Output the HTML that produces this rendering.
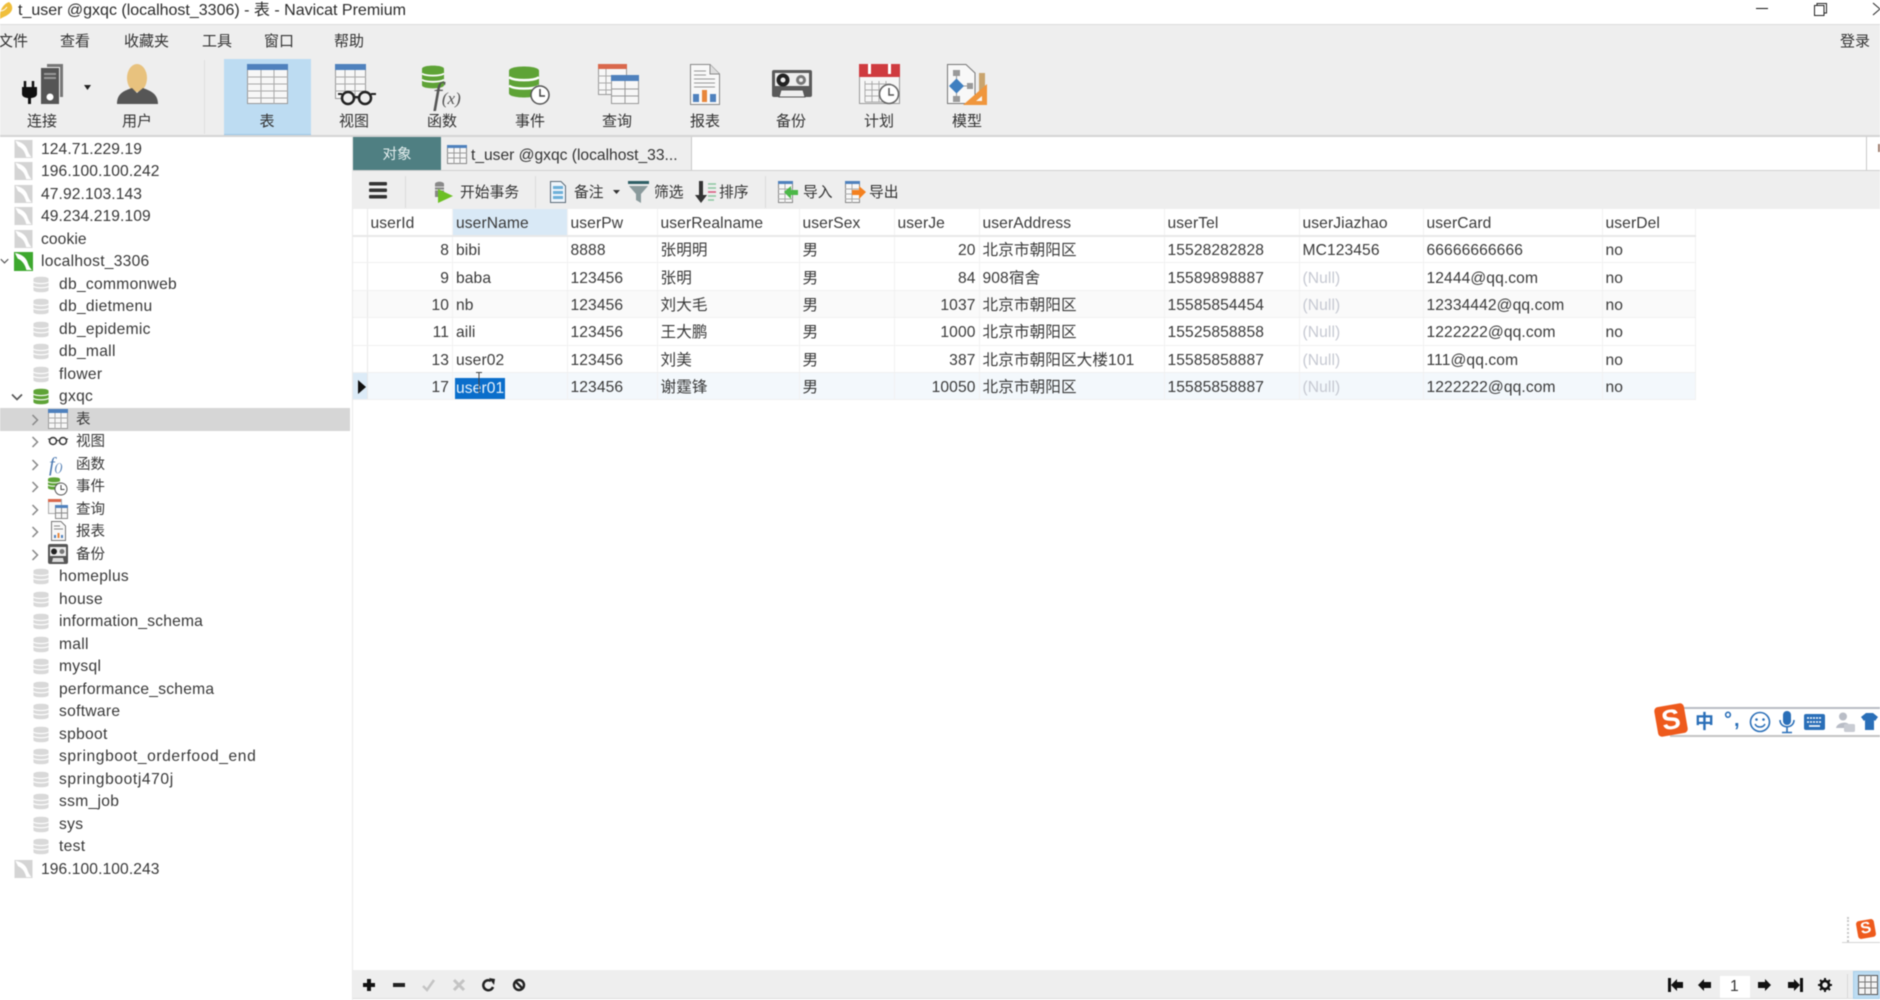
<!DOCTYPE html>
<html lang="zh">
<head>
<meta charset="utf-8">
<title>t_user @gxqc (localhost_3306) - 表 - Navicat Premium</title>
<style>
*{box-sizing:border-box}
html,body{margin:0;padding:0;width:1880px;height:1000px;overflow:hidden;background:#fff}
body{font-family:"Liberation Sans","Noto Sans CJK SC",sans-serif;color:#333;font-size:15.5px}
#root{position:absolute;left:0;top:0;width:1880px;height:1000px;overflow:hidden;filter:blur(.5px);background:#fff}
.a{position:absolute}
.t{position:absolute;white-space:nowrap;line-height:20px}
.lb{position:absolute;top:111.5px;width:60px;text-align:center;font-size:15px;line-height:20px;color:#333}
svg{position:absolute;overflow:visible}
.m{position:absolute;top:32px;font-size:15px;line-height:20px;color:#333}
#tree{position:absolute;left:0;top:137px;width:350px}
.r{position:relative;height:22.5px;line-height:22.5px;white-space:nowrap;font-size:15.6px;color:#383838}
.r span{position:absolute;top:1.5px}
.r svg{top:0;margin-top:.5px}
.l1 span{left:41px;letter-spacing:.1px}.l2 span{left:59px;letter-spacing:.3px}.l3 span{left:76px;font-size:14.5px;letter-spacing:0}
table{position:absolute;left:353px;top:209px;border-collapse:collapse;table-layout:fixed;width:1342px;font-size:15.6px;color:#3a3a3a;letter-spacing:.1px}
td{height:27.4px;padding:4px 3px 0;border-right:1px solid #f2f2f2;border-bottom:1px solid #f0f0f0;white-space:nowrap;overflow:hidden;line-height:20px}
tr.h td{height:26.5px;border-bottom:2px solid #e8e8e8;background:#fff}
td.g{padding:0;border-right:1px solid #e8e8e8}
td.n{text-align:right}
td.z{color:#c6c9d2}
</style>
</head>
<body>
<div id="root">
<svg width="0" height="0" style="position:absolute">
<defs>
<symbol id="srv" viewBox="0 0 20 20"><rect width="20" height="20" fill="#d4d4d4"/><path d="M1 1C7 2 12 5 14 10 15 13 16 16 19 19L13 19C12 14 9 9 4 7 3 5 2 3 1 1Z" fill="#fff"/></symbol>
<symbol id="srvg" viewBox="0 0 20 20"><rect width="20" height="20" fill="#3da82e"/><path d="M1 1C7 2 12 5 14 10 15 13 16 16 19 19L13 19C12 14 9 9 4 7 3 5 2 3 1 1Z" fill="#fff"/></symbol>
<symbol id="db" viewBox="0 0 16 18"><path d="M0 3C0 0 16 0 16 3V15C16 18 0 18 0 15Z" fill="#d9d9d9"/><path d="M0 6.500C3 8.500 13 8.500 16 6.500M0 11C3 13 13 13 16 11" stroke="#fff" stroke-width="1.300" fill="none"/></symbol>
<symbol id="dbg" viewBox="0 0 16 18"><path d="M0 3C0 0 16 0 16 3V15C16 18 0 18 0 15Z" fill="#5ea336"/><path d="M0 6.500C3 8.500 13 8.500 16 6.500M0 11C3 13 13 13 16 11" stroke="#fff" stroke-width="1.300" fill="none"/></symbol>
<symbol id="chv" viewBox="0 0 8 12"><path d="M1.500 1L6.500 6 1.500 11" fill="none" stroke="#888" stroke-width="1.500"/></symbol>
<symbol id="chd" viewBox="0 0 12 8"><path d="M1 1.500L6 6.500 11 1.500" fill="none" stroke="#555" stroke-width="1.600"/></symbol>
</defs>
</svg>

<!-- Title bar -->
<svg style="left:0;top:2px" width="14" height="18" viewBox="0 0 14 18"><path d="M0 17C-1 9 3 2 9 0 12 2 14 7 10 11 7 14 3 15 0 17Z" fill="#f0bf3c"/><path d="M0 9C3 9 5 8 7 5" stroke="#fff" fill="none"/></svg>
<div class="t" style="left:18px;top:1px;height:24px;line-height:20px;font-size:16px;color:#2b2b2b">t_user @gxqc (localhost_3306) - 表 - Navicat Premium</div>
<div class="a" style="left:1756px;top:8px;width:12px;height:1px;background:#111"></div>
<svg style="left:1814px;top:3px" width="13" height="13" viewBox="0 0 13 13"><rect x=".5" y="2.500" width="9.500" height="10" fill="#fff" stroke="#222"/><path d="M3 2.500V.5H12.500V10H10" fill="none" stroke="#222"/></svg>
<svg style="left:1873px;top:3px" width="7" height="12" viewBox="0 0 7 12"><path d="M0 0L7 6 0 12" fill="none" stroke="#222"/></svg>

<!-- Toolbar bg -->
<div class="a" style="left:0;top:24px;width:1880px;height:113px;background:#eeeeee;border-top:1px solid #dcdcdc;border-bottom:2px solid #d4d4d4"></div>
<div class="m" style="left:-2px">文件</div>
<div class="m" style="left:60px">查看</div>
<div class="m" style="left:124px">收藏夹</div>
<div class="m" style="left:202px">工具</div>
<div class="m" style="left:264px">窗口</div>
<div class="m" style="left:334px">帮助</div>
<div class="m" style="left:1840px">登录</div>

<div class="a" style="left:204px;top:60px;width:1px;height:74px;background:#dedede"></div>
<div class="a" style="left:224px;top:59px;width:87px;height:76px;background:#bddcf2;border-bottom:1px solid #9fc9e8"></div>

<!-- connect -->
<svg style="left:22px;top:64px" width="42" height="40" viewBox="0 0 42 40"><path d="M25 3V0H41V33H38V3Z" fill="#777"/><rect x="19" y="4" width="18" height="36" fill="#555"/><rect x="22" y="9" width="12" height="2" fill="#999"/><rect x="22" y="13" width="12" height="2" fill="#999"/><circle cx="28" cy="33" r="3.500" fill="#fff"/><path d="M3 17V23M11 17V23" stroke="#111" stroke-width="2.500"/><path d="M0 23H15V30C15 33 11 34 9 34V40H6V34C4 34 0 33 0 30Z" fill="#111"/></svg>
<svg style="left:84px;top:85px" width="7" height="5" viewBox="0 0 7 5"><path d="M0 0H7L3.500 5Z" fill="#222"/></svg>
<!-- user -->
<svg style="left:117px;top:64px" width="41" height="40" viewBox="0 0 41 40"><ellipse cx="20" cy="14" rx="10" ry="14" fill="#e8c27e"/><path d="M0 40C0 30 6 27 15 24L20 29 26 24C34 27 41 30 41 40Z" fill="#565656"/></svg>
<div class="lb" style="left:12px">连接</div>
<div class="lb" style="left:107px">用户</div>

<!-- table -->
<svg style="left:247px;top:64px" width="41" height="40" viewBox="0 0 41 40"><rect x=".5" y=".5" width="40" height="39" fill="#f7f7f7" stroke="#999"/><rect width="41" height="6" fill="#4f81bd"/><path d="M0 13H41M0 20H41M0 27H41M0 34H41M14 6V40M27 6V40" stroke="#a9a9a9"/></svg>
<div class="lb" style="left:237px">表</div>
<!-- view -->
<svg style="left:335px;top:64px" width="42" height="41" viewBox="0 0 42 41"><rect x=".5" y=".5" width="30" height="34" fill="#f7f7f7" stroke="#999"/><rect width="31" height="6" fill="#4f81bd"/><path d="M0 13H31M0 20H31M0 27H31M10 6V35M20 6V35" stroke="#a9a9a9"/><circle cx="13" cy="34" r="6" fill="#eee" stroke="#222" stroke-width="2.500"/><circle cx="30" cy="34" r="6" fill="#eee" stroke="#222" stroke-width="2.500"/><path d="M19 33H24M3 30H7M36 30H41" stroke="#222" stroke-width="2"/></svg>
<div class="lb" style="left:324px">视图</div>
<!-- function -->
<svg style="left:422px;top:64px" width="22" height="26" viewBox="0 0 16 18"><use href="#dbg" width="16" height="18"/></svg>
<div class="t" style="left:433px;top:80px;font-family:'Liberation Serif',serif;font-style:italic;font-size:32px;line-height:26px;color:#555">f<span style="font-size:17px">(x)</span></div>
<div class="lb" style="left:412px">函数</div>
<!-- event -->
<svg style="left:509px;top:64px" width="30" height="36" viewBox="0 0 16 18"><use href="#dbg" width="16" height="18"/></svg>
<svg style="left:530px;top:85px" width="20" height="20" viewBox="0 0 20 20"><circle cx="10" cy="10" r="9" fill="#fff" stroke="#555" stroke-width="1.500"/><path d="M10 4V11H15" fill="none" stroke="#444" stroke-width="1.500"/></svg>
<div class="lb" style="left:500px">事件</div>
<!-- query -->
<svg style="left:598px;top:64px" width="41" height="40" viewBox="0 0 41 40"><rect x=".5" y=".5" width="28" height="30" fill="#f7f7f7" stroke="#999"/><rect width="29" height="5" fill="#d9684c"/><path d="M0 12H14M0 19H14M0 26H14M8 5V30" stroke="#aaa"/><rect x="13.500" y="11.500" width="27" height="28" fill="#f7f7f7" stroke="#999"/><rect x="13" y="11" width="28" height="6" fill="#4f81bd"/><path d="M13 25H41M13 32H41M27 17V40" stroke="#999"/></svg>
<div class="lb" style="left:587px">查询</div>
<!-- report -->
<svg style="left:690px;top:64px" width="30" height="41" viewBox="0 0 30 41"><path d="M.5.5H20L29.500 10V40.500H.5Z" fill="#f8f8f8" stroke="#888"/><path d="M20 .5V10H29.500" fill="#ddd" stroke="#888"/><path d="M4 7H16M4 11H16M4 15H25M4 19H25M4 23H25" stroke="#999"/><rect x="3" y="30" width="6" height="8" fill="#4f81bd"/><rect x="12" y="26" width="5" height="12" fill="#e8863a"/><rect x="20" y="30" width="6" height="8" fill="#4f81bd"/></svg>
<div class="lb" style="left:675px">报表</div>
<!-- backup -->
<svg style="left:772px;top:70px" width="40" height="28" viewBox="0 0 40 28"><rect width="40" height="27" rx="2" fill="#5a5a5a"/><rect x="3" y="3" width="34" height="13" fill="#eee"/><circle cx="11" cy="10" r="6.500" fill="#222"/><circle cx="11" cy="10" r="2.500" fill="#eee"/><circle cx="29" cy="10" r="5" fill="#777"/><circle cx="29" cy="10" r="2" fill="#eee"/><path d="M7 27L9 20H31L33 27Z" fill="#eee" stroke="#555"/></svg>
<div class="lb" style="left:761px">备份</div>
<!-- schedule -->
<svg style="left:859px;top:64px" width="41" height="41" viewBox="0 0 41 41"><rect x=".5" y=".5" width="40" height="39" fill="#f6f6f6" stroke="#999"/><rect width="41" height="13" fill="#cf3b3f"/><rect x="9" y="0" width="3" height="10" fill="#fff"/><rect x="29" y="0" width="3" height="10" fill="#fff"/><path d="M6 20H32M6 26H30M6 32H26M6 38H26M6 17V38M13 17V38M20 17V38M27 17V30" stroke="#aaa"/><circle cx="30" cy="30" r="9.500" fill="#fff" stroke="#666" stroke-width="1.500"/><path d="M30 24V31H35" fill="none" stroke="#555" stroke-width="1.500"/></svg>
<div class="lb" style="left:849px">计划</div>
<!-- model -->
<svg style="left:947px;top:64px" width="41" height="41" viewBox="0 0 41 41"><path d="M.5.5H19L28 9V39.500H.5Z" fill="#f8f8f8" stroke="#777"/><rect x="6" y="6" width="7" height="6" fill="#999"/><rect x="6" y="32" width="7" height="6" fill="#999"/><path d="M9.500 12V32M9.500 22H24" stroke="#999"/><path d="M9.500 14.500L17 22 9.500 29.500 2 22Z" fill="#3f7fc0"/><rect x="20" y="19" width="6" height="6" fill="#999"/><rect x="32" y="9" width="6" height="18" fill="#c9a46e"/><path d="M40 20V41H16Z" fill="#f0963c"/><path d="M35 32V37H29Z" fill="#f7f7f7"/></svg>
<div class="lb" style="left:937px">模型</div>

<!-- Sidebar -->
<div class="a" style="left:352px;top:137px;width:1px;height:863px;background:#eaeaea"></div>
<div class="a" style="left:0;top:408px;width:350px;height:22.500px;background:#d6d6d6"></div>
<div id="tree">
<div class="r l1"><svg style="left:14px;top:2px" width="19" height="18"><use href="#srv" width="19" height="18"/></svg><span>124.71.229.19</span></div>
<div class="r l1"><svg style="left:14px;top:2px" width="19" height="18"><use href="#srv" width="19" height="18"/></svg><span>196.100.100.242</span></div>
<div class="r l1"><svg style="left:14px;top:2px" width="19" height="18"><use href="#srv" width="19" height="18"/></svg><span>47.92.103.143</span></div>
<div class="r l1"><svg style="left:14px;top:2px" width="19" height="18"><use href="#srv" width="19" height="18"/></svg><span>49.234.219.109</span></div>
<div class="r l1"><svg style="left:14px;top:2px" width="19" height="18"><use href="#srv" width="19" height="18"/></svg><span>cookie</span></div>
<div class="r l1"><svg style="left:0;top:8px" width="9" height="6"><use href="#chd" width="9" height="6"/></svg><svg style="left:13px;top:2px" width="21" height="19"><use href="#srvg" width="21" height="19"/></svg><span style="letter-spacing:.25px">localhost_3306</span></div>
<div class="r l2"><svg style="left:33px;top:3px" width="16" height="17"><use href="#db" width="16" height="17"/></svg><span>db_commonweb</span></div>
<div class="r l2"><svg style="left:33px;top:3px" width="16" height="17"><use href="#db" width="16" height="17"/></svg><span>db_dietmenu</span></div>
<div class="r l2"><svg style="left:33px;top:3px" width="16" height="17"><use href="#db" width="16" height="17"/></svg><span>db_epidemic</span></div>
<div class="r l2"><svg style="left:33px;top:3px" width="16" height="17"><use href="#db" width="16" height="17"/></svg><span>db_mall</span></div>
<div class="r l2"><svg style="left:33px;top:3px" width="16" height="17"><use href="#db" width="16" height="17"/></svg><span>flower</span></div>
<div class="r l2"><svg style="left:11px;top:8px" width="12" height="8"><use href="#chd" width="12" height="8"/></svg><svg style="left:33px;top:3px" width="16" height="17"><use href="#dbg" width="16" height="17"/></svg><span>gxqc</span></div>
<div class="r l3"><svg style="left:31px;top:6px" width="8" height="12"><use href="#chv" width="8" height="12"/></svg><svg style="left:48px;top:1px" width="20" height="20" viewBox="0 0 20 20"><rect x=".5" y=".5" width="19" height="19" fill="#f7f7f7" stroke="#999"/><rect width="20" height="4" fill="#4f81bd"/><path d="M0 9H20M0 14H20M7 4V20M13 4V20" stroke="#aaa"/></svg><span>表</span></div>
<div class="r l3"><svg style="left:31px;top:6px" width="8" height="12"><use href="#chv" width="8" height="12"/></svg><svg style="left:48px;top:6px" width="20" height="10" viewBox="0 0 20 10"><circle cx="5" cy="5" r="3.500" fill="none" stroke="#333" stroke-width="1.500"/><circle cx="15" cy="5" r="3.500" fill="none" stroke="#333" stroke-width="1.500"/><path d="M8.500 4.500H11.500M0 3H2M18 3H20" stroke="#333"/></svg><span>视图</span></div>
<div class="r l3"><span style="left:49px;font-family:'Liberation Serif',serif;font-style:italic;font-size:20px;color:#4a78b0">f<small style="font-size:12px">()</small></span><svg style="left:31px;top:6px" width="8" height="12"><use href="#chv" width="8" height="12"/></svg><span>函数</span></div>
<div class="r l3"><svg style="left:31px;top:6px" width="8" height="12"><use href="#chv" width="8" height="12"/></svg><svg style="left:48px;top:1px" width="12" height="15"><use href="#dbg" width="12" height="15"/></svg><svg style="left:54px;top:7px" width="14" height="14" viewBox="0 0 14 14"><circle cx="7" cy="7" r="6" fill="#fff" stroke="#555"/><path d="M7 3V7.500H10.500" fill="none" stroke="#444"/></svg><span>事件</span></div>
<div class="r l3"><svg style="left:31px;top:6px" width="8" height="12"><use href="#chv" width="8" height="12"/></svg><svg style="left:48px;top:1px" width="20" height="20" viewBox="0 0 20 20"><rect x=".5" y=".5" width="13" height="14" fill="#f7f7f7" stroke="#aaa"/><rect width="13" height="3" fill="#d9684c"/><rect x="7.500" y="6.500" width="12" height="13" fill="#f7f7f7" stroke="#888"/><rect x="7" y="6" width="13" height="3" fill="#4f81bd"/><path d="M7 14H20M13.500 9V20" stroke="#888"/></svg><span>查询</span></div>
<div class="r l3"><svg style="left:31px;top:6px" width="8" height="12"><use href="#chv" width="8" height="12"/></svg><svg style="left:51px;top:1px" width="15" height="20" viewBox="0 0 15 20"><path d="M.5.5H10L14.500 5V19.500H.5Z" fill="#f8f8f8" stroke="#777"/><path d="M3 5H9M3 8H12" stroke="#888"/><rect x="3" y="14" width="2" height="3" fill="#4f81bd"/><rect x="6.500" y="12" width="2" height="5" fill="#e8863a"/><rect x="10" y="14" width="2" height="3" fill="#4f81bd"/></svg><span>报表</span></div>
<div class="r l3"><svg style="left:31px;top:6px" width="8" height="12"><use href="#chv" width="8" height="12"/></svg><svg style="left:48px;top:1px" width="20" height="20" viewBox="0 0 20 20"><rect width="20" height="20" rx="2" fill="#555"/><rect x="2" y="3" width="16" height="9" fill="#eee"/><circle cx="6" cy="7.500" r="3" fill="#222"/><circle cx="14" cy="7.500" r="2.500" fill="#777"/><path d="M4 18L5 14H15L16 18" fill="#ddd"/></svg><span>备份</span></div>
<div class="r l2"><svg style="left:33px;top:3px" width="16" height="17"><use href="#db" width="16" height="17"/></svg><span>homeplus</span></div>
<div class="r l2"><svg style="left:33px;top:3px" width="16" height="17"><use href="#db" width="16" height="17"/></svg><span>house</span></div>
<div class="r l2"><svg style="left:33px;top:3px" width="16" height="17"><use href="#db" width="16" height="17"/></svg><span style="letter-spacing:.2px">information_schema</span></div>
<div class="r l2"><svg style="left:33px;top:3px" width="16" height="17"><use href="#db" width="16" height="17"/></svg><span>mall</span></div>
<div class="r l2"><svg style="left:33px;top:3px" width="16" height="17"><use href="#db" width="16" height="17"/></svg><span>mysql</span></div>
<div class="r l2"><svg style="left:33px;top:3px" width="16" height="17"><use href="#db" width="16" height="17"/></svg><span style="letter-spacing:.25px">performance_schema</span></div>
<div class="r l2"><svg style="left:33px;top:3px" width="16" height="17"><use href="#db" width="16" height="17"/></svg><span>software</span></div>
<div class="r l2"><svg style="left:33px;top:3px" width="16" height="17"><use href="#db" width="16" height="17"/></svg><span>spboot</span></div>
<div class="r l2"><svg style="left:33px;top:3px" width="16" height="17"><use href="#db" width="16" height="17"/></svg><span style="letter-spacing:.6px">springboot_orderfood_end</span></div>
<div class="r l2"><svg style="left:33px;top:3px" width="16" height="17"><use href="#db" width="16" height="17"/></svg><span style="letter-spacing:.6px">springbootj470j</span></div>
<div class="r l2"><svg style="left:33px;top:3px" width="16" height="17"><use href="#db" width="16" height="17"/></svg><span>ssm_job</span></div>
<div class="r l2"><svg style="left:33px;top:3px" width="16" height="17"><use href="#db" width="16" height="17"/></svg><span>sys</span></div>
<div class="r l2"><svg style="left:33px;top:3px" width="16" height="17"><use href="#db" width="16" height="17"/></svg><span>test</span></div>
<div class="r l1"><svg style="left:14px;top:2px" width="19" height="18"><use href="#srv" width="19" height="18"/></svg><span>196.100.100.243</span></div>
</div>

<!-- Tabs -->
<div class="a" style="left:353px;top:137px;width:1527px;height:34px;background:#fff;border-bottom:1px solid #d0d0d0"></div>
<div class="a" style="left:353px;top:137px;width:88px;height:33px;background:#4f7f82;color:#e6f0f0;text-align:center;line-height:36px;font-size:14.5px">对象</div>
<div class="a" style="left:441px;top:137px;width:251px;height:33px;background:#eeeeee;border-right:1px solid #c8c8c8"></div>
<svg style="left:447px;top:145px" width="20" height="19" viewBox="0 0 20 19"><rect x=".5" y=".5" width="19" height="18" fill="#f7f7f7" stroke="#888"/><rect width="20" height="3" fill="#4f81bd"/><path d="M0 8H20M0 13H20M7 3V19M13 3V19" stroke="#999"/></svg>
<div class="t" style="left:471px;top:146px;font-size:15.6px;color:#333">t_user @gxqc (localhost_33...</div>
<div class="a" style="left:1866px;top:137px;width:1px;height:33px;background:#c8c8c8"></div>
<div class="a" style="left:1878px;top:144px;width:2px;height:8px;background:#a08070"></div>

<!-- Action toolbar -->
<div class="a" style="left:353px;top:171px;width:1527px;height:38px;background:#eeeeee"></div>
<svg style="left:369px;top:182px" width="18" height="17" viewBox="0 0 18 17"><rect width="18" height="3.500" rx="1" fill="#333"/><rect y="6.500" width="18" height="3.500" rx="1" fill="#333"/><rect y="13" width="18" height="3.500" rx="1" fill="#333"/></svg>
<div class="a" style="left:405px;top:176px;width:1px;height:32px;background:#dcdcdc"></div>
<svg style="left:434px;top:181px" width="20" height="22" viewBox="0 0 20 22"><path d="M1 3C1 0 10 0 10 3V16H1Z" fill="#888"/><path d="M1 6H10M1 9H10" stroke="#ddd"/><path d="M4 8L19 15 4 22Z" fill="#6cc024"/></svg>
<div class="t" style="left:460px;top:183px;font-size:14.8px">开始事务</div>
<div class="a" style="left:535px;top:176px;width:1px;height:32px;background:#dcdcdc"></div>
<svg style="left:550px;top:181px" width="16" height="22" viewBox="0 0 16 22"><path d="M.5.5H11L15.500 5V21.500H.5Z" fill="#eef5fb" stroke="#5b6b78"/><rect x="3" y="5" width="10" height="3" fill="#6db0d8"/><rect x="3" y="10" width="10" height="3" fill="#6db0d8"/><rect x="3" y="15" width="10" height="3" fill="#6db0d8"/></svg>
<div class="t" style="left:574px;top:183px;font-size:14.8px">备注</div>
<svg style="left:613px;top:190px" width="7" height="4" viewBox="0 0 7 4"><path d="M0 0H7L3.500 4Z" fill="#333"/></svg>
<svg style="left:628px;top:181px" width="21" height="22" viewBox="0 0 21 22"><rect width="21" height="3" fill="#2f5f66"/><path d="M1 5H20L13 13V22L8 19V13Z" fill="#8a9a9c"/></svg>
<div class="t" style="left:654px;top:183px;font-size:14.8px">筛选</div>
<svg style="left:695px;top:181px" width="21" height="22" viewBox="0 0 21 22"><path d="M4 0H8V14H12L6 22 0 14H4Z" fill="#333"/><path d="M13 3H21M13 7H21" stroke="#8cc6a0" stroke-width="1.500"/><path d="M13 11H21" stroke="#d9547a" stroke-width="1.500"/><path d="M13 15H21M13 19H19" stroke="#8cc6a0" stroke-width="1.500"/></svg>
<div class="t" style="left:719px;top:183px;font-size:14.8px">排序</div>
<div class="a" style="left:765px;top:176px;width:1px;height:32px;background:#dcdcdc"></div>
<svg style="left:778px;top:181px" width="21" height="22" viewBox="0 0 21 22"><rect x=".5" y=".5" width="14" height="21" fill="#f7f7f7" stroke="#888"/><rect width="15" height="3" fill="#4f81bd"/><path d="M0 8H15M0 13H15M0 18H15M7 3V22" stroke="#aaa"/><path d="M6 11L13 5V9H20V14H13V18Z" fill="#4cb848"/></svg>
<div class="t" style="left:803px;top:183px;font-size:14.8px">导入</div>
<svg style="left:845px;top:181px" width="21" height="22" viewBox="0 0 21 22"><rect x=".5" y=".5" width="14" height="21" fill="#f7f7f7" stroke="#888"/><rect width="15" height="3" fill="#4f81bd"/><path d="M0 8H15M0 13H15M0 18H15M7 3V22" stroke="#aaa"/><path d="M21 11L14 5V9H7V14H14V18Z" fill="#f4801f"/></svg>
<div class="t" style="left:869px;top:183px;font-size:14.8px">导出</div>

<!-- Grid -->
<table>
<colgroup><col style="width:14px"><col style="width:85.500px"><col style="width:114.500px"><col style="width:90px"><col style="width:142px"><col style="width:95px"><col style="width:85px"><col style="width:185px"><col style="width:135px"><col style="width:124px"><col style="width:179px"><col style="width:93px"></colgroup>
<tr class="h"><td class="g"></td><td>userId</td><td style="background:#d9e9f6">userName</td><td>userPw</td><td>userRealname</td><td>userSex</td><td>userJe</td><td>userAddress</td><td>userTel</td><td>userJiazhao</td><td>userCard</td><td>userDel</td></tr>
<tr><td class="g"></td><td class="n">8</td><td>bibi</td><td>8888</td><td>张明明</td><td>男</td><td class="n">20</td><td>北京市朝阳区</td><td>15528282828</td><td>MC123456</td><td>66666666666</td><td>no</td></tr>
<tr><td class="g"></td><td class="n">9</td><td>baba</td><td>123456</td><td>张明</td><td>男</td><td class="n">84</td><td>908宿舍</td><td>15589898887</td><td class="z">(Null)</td><td>12444@qq.com</td><td>no</td></tr>
<tr style="background:#fafafa"><td class="g"></td><td class="n">10</td><td>nb</td><td>123456</td><td>刘大毛</td><td>男</td><td class="n">1037</td><td>北京市朝阳区</td><td>15585854454</td><td class="z">(Null)</td><td>12334442@qq.com</td><td>no</td></tr>
<tr><td class="g"></td><td class="n">11</td><td>aili</td><td>123456</td><td>王大鹏</td><td>男</td><td class="n">1000</td><td>北京市朝阳区</td><td>15525858858</td><td class="z">(Null)</td><td>1222222@qq.com</td><td>no</td></tr>
<tr><td class="g"></td><td class="n">13</td><td>user02</td><td>123456</td><td>刘美</td><td>男</td><td class="n">387</td><td>北京市朝阳区大楼101</td><td>15585858887</td><td class="z">(Null)</td><td>111@qq.com</td><td>no</td></tr>
<tr style="background:#f3f8fc"><td class="g" style="background:#dcebf7"></td><td class="n">17</td><td><span style="background:#0a6ecb;color:#e8f2fb;display:inline-block;padding:0 1px;height:21px;line-height:21px;margin-left:-1px">user01</span></td><td>123456</td><td>谢霆锋</td><td>男</td><td class="n">10050</td><td>北京市朝阳区</td><td>15585858887</td><td class="z">(Null)</td><td>1222222@qq.com</td><td>no</td></tr>
</table>
<svg style="left:358px;top:380px" width="8" height="14" viewBox="0 0 8 14"><path d="M0 0L8 7 0 14Z" fill="#111"/></svg>
<svg style="left:475px;top:372px" width="8" height="22" viewBox="0 0 8 22"><path d="M1 .5H7M4 .5V21" stroke="#444" fill="none"/></svg>

<!-- IME bar -->
<div class="a" style="left:1670px;top:707px;width:210px;height:30px;background:#fff;border-top:2px solid #b8bcc4;border-bottom:2px solid #c4c4c4"></div>
<div class="a" style="left:1656px;top:705px;width:30px;height:30px;background:#ee5a1c;border-radius:4px;transform:rotate(-10deg);color:#fff;font-weight:bold;font-size:28px;line-height:30px;text-align:center">S</div>
<div class="t" style="left:1695px;top:713px;font-size:19px;color:#2a6fb8;font-weight:bold">中</div>
<div class="t" style="left:1724px;top:710px;font-size:20px;letter-spacing:2px;color:#2a6fb8;font-weight:bold">°,</div>
<svg style="left:1749px;top:711px" width="22" height="22" viewBox="0 0 22 22"><circle cx="11" cy="11" r="9.500" fill="none" stroke="#2a6fb8" stroke-width="1.600"/><circle cx="7.500" cy="8.500" r="1.300" fill="#2a6fb8"/><circle cx="14.500" cy="8.500" r="1.300" fill="#2a6fb8"/><path d="M6 13C8 17 14 17 16 13" fill="none" stroke="#2a6fb8" stroke-width="1.500"/></svg>
<svg style="left:1779px;top:711px" width="16" height="22" viewBox="0 0 16 22"><rect x="4" y="0" width="8" height="14" rx="4" fill="#2a6fb8"/><path d="M1 9C1 18 15 18 15 9M8 16V21M3 21.500H13" fill="none" stroke="#2a6fb8" stroke-width="1.600"/></svg>
<svg style="left:1804px;top:714px" width="21" height="16" viewBox="0 0 21 16"><rect width="21" height="16" rx="2" fill="#2a6fb8"/><path d="M3 4H18M3 8H18" stroke="#fff" stroke-width="1.500" stroke-dasharray="2 1"/><path d="M5 12H16" stroke="#fff" stroke-width="1.600"/></svg>
<svg style="left:1835px;top:712px" width="20" height="20" viewBox="0 0 20 20"><circle cx="8" cy="4.500" r="4" fill="#b9bdc6"/><path d="M1 16C2 10 13 9 14 13V16Z" fill="#b9bdc6"/><rect x="9" y="12" width="11" height="8" rx="1.500" fill="#c9ccd3"/></svg>
<svg style="left:1861px;top:713px" width="17" height="17" viewBox="0 0 17 17"><path d="M5 0H12L17 4 14 8 13 7V17H4V7L3 8 0 4Z" fill="#2a6fb8"/></svg>

<!-- small S -->
<div class="a" style="left:1847px;top:917px;width:0;height:25px;border-left:2px dotted #c8c8c8"></div>
<div class="a" style="left:1842px;top:942px;width:38px;height:1px;background:#d4d4d4"></div>
<div class="a" style="left:1857px;top:920px;width:18px;height:18px;background:#ee5a1c;border-radius:3px;transform:rotate(-10deg);color:#fff;font-weight:bold;font-size:16px;line-height:18px;text-align:center">S</div>

<!-- Bottom bar -->
<div class="a" style="left:353px;top:970px;width:1527px;height:29px;background:#eeeeee;border-bottom:1px solid #dedede"></div>
<svg style="left:362px;top:978px" width="14" height="14" viewBox="0 0 14 14"><path d="M5 1H9V5H13V9H9V13H5V9H1V5H5Z" fill="#111"/></svg>
<div class="a" style="left:393px;top:983px;width:12px;height:4px;background:#222"></div>
<svg style="left:422px;top:978px" width="13" height="14" viewBox="0 0 13 14"><path d="M1 8L5 12 12 2" fill="none" stroke="#c4c4c4" stroke-width="2.500"/></svg>
<svg style="left:453px;top:979px" width="12" height="12" viewBox="0 0 12 12"><path d="M1 1L11 11M11 1L1 11" stroke="#c4c4c4" stroke-width="3"/></svg>
<svg style="left:482px;top:978px" width="14" height="14" viewBox="0 0 14 14"><path d="M11 9A5 5 0 1 1 9 3" fill="none" stroke="#222" stroke-width="2.500"/><path d="M7 0L13 1 12 7Z" fill="#222"/></svg>
<svg style="left:512px;top:978px" width="14" height="14" viewBox="0 0 14 14"><circle cx="7" cy="7" r="5" fill="none" stroke="#222" stroke-width="2.400"/><path d="M3.500 3.500L10.500 10.500" stroke="#222" stroke-width="2.400"/></svg>

<svg style="left:1668px;top:978px" width="15" height="14" viewBox="0 0 15 14"><rect width="3" height="14" fill="#111"/><path d="M3 7L9 1V4H15V10H9V13Z" fill="#111"/></svg>
<svg style="left:1698px;top:979px" width="13" height="12" viewBox="0 0 13 12"><path d="M0 6L6 0V3H13V9H6V12Z" fill="#111"/></svg>
<div class="a" style="left:1720px;top:976px;width:30px;height:22px;background:#fff"></div>
<div class="t" style="left:1730px;top:977px;font-size:15.6px">1</div>
<svg style="left:1758px;top:979px" width="13" height="12" viewBox="0 0 13 12"><path d="M13 6L7 0V3H0V9H7V12Z" fill="#111"/></svg>
<svg style="left:1788px;top:978px" width="15" height="14" viewBox="0 0 15 14"><rect x="12" width="3" height="14" fill="#111"/><path d="M12 7L6 1V4H0V10H6V13Z" fill="#111"/></svg>
<svg style="left:1818px;top:978px" width="14" height="14" viewBox="0 0 14 14"><circle cx="7" cy="7" r="4" fill="none" stroke="#111" stroke-width="2.600"/><path d="M7 0V3M7 11V14M0 7H3M11 7H14M2 2L4 4M10 10L12 12M12 2L10 4M4 10L2 12" stroke="#111" stroke-width="2"/></svg>
<div class="a" style="left:1847px;top:974px;width:1px;height:24px;background:#d8d8d8"></div>
<div class="a" style="left:1853px;top:971px;width:27px;height:28px;background:#bddcf2;border:1px solid #a8cfea"></div>
<svg style="left:1858px;top:975px" width="20" height="20" viewBox="0 0 20 20"><rect x=".5" y=".5" width="19" height="19" fill="#f4f4f4" stroke="#555"/><path d="M0 7H20M0 13H20M7 0V20M13 0V20" stroke="#777"/></svg>
</div>
</body>
</html>
